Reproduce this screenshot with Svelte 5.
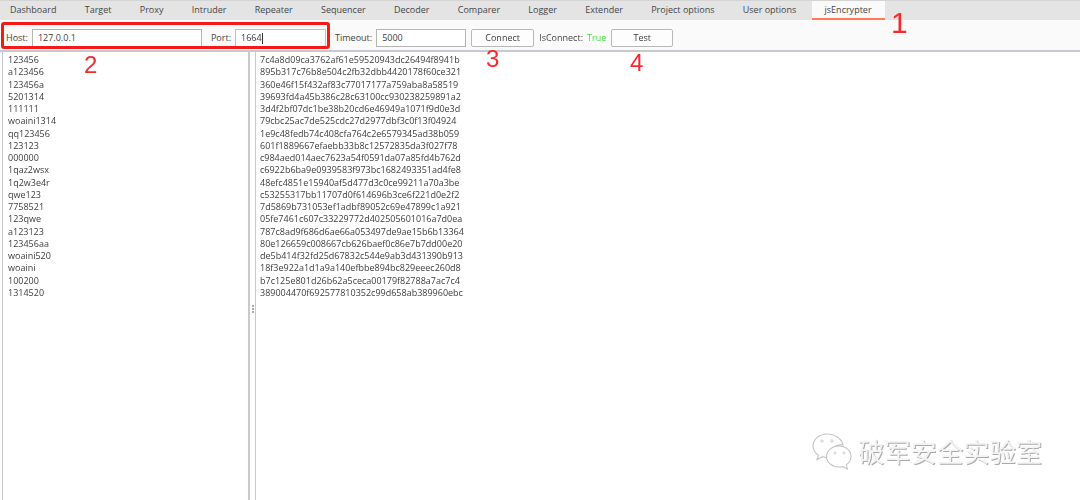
<script lang="ts">
  const tabs = ['Dashboard', 'Target', 'Proxy', 'Intruder', 'Repeater', 'Sequencer', 'Decoder', 'Comparer', 'Logger', 'Extender', 'Project options', 'User options', 'jsEncrypter'];
  const passwords = ['123456', 'a123456', '123456a', '5201314', '111111', 'woaini1314', 'qq123456', '123123', '000000', '1qaz2wsx', '1q2w3e4r', 'qwe123', '7758521', '123qwe', 'a123123', '123456aa', 'woaini520', 'woaini', '100200', '1314520'];
  const hashes = [
    '7c4a8d09ca3762af61e59520943dc26494f8941b',
    '895b317c76b8e504c2fb32dbb4420178f60ce321',
    '360e46f15f432af83c77017177a759aba8a58519',
    '39693fd4a45b386c28c63100cc930238259891a2',
    '3d4f2bf07dc1be38b20cd6e46949a1071f9d0e3d',
    '79cbc25ac7de525cdc27d2977dbf3c0f13f04924',
    '1e9c48fedb74c408cfa764c2e6579345ad38b059',
    '601f1889667efaebb33b8c12572835da3f027f78',
    'c984aed014aec7623a54f0591da07a85fd4b762d',
    'c6922b6ba9e0939583f973bc1682493351ad4fe8',
    '48efc4851e15940af5d477d3c0ce99211a70a3be',
    'c53255317bb11707d0f614696b3ce6f221d0e2f2',
    '7d5869b731053ef1adbf89052c69e47899c1a921',
    '05fe7461c607c33229772d402505601016a7d0ea',
    '787c8ad9f686d6ae66a053497de9ae15b6b13364',
    '80e126659c008667cb626baef0c86e7b7dd00e20',
    'de5b414f32fd25d67832c544e9ab3d431390b913',
    '18f3e922a1d1a9a140efbbe894bc829eeec260d8',
    'b7c125e801d26b62a5ceca00179f82788a7ac7c4',
    '389004470f692577810352c99d658ab389960ebc'
  ];
</script>

<div class="window">
  <nav class="tabs">
    {#each tabs as tab}
      <div class="tab" class:active={tab === 'jsEncrypter'}>{tab}</div>
    {/each}
  </nav>

  <div class="toolbar">
    <span class="label">Host:</span>
    <input class="host" value="127.0.0.1" />
    <span class="label port-label">Port:</span>
    <div class="port-wrap">
      <input class="port" value="1664" />
      <i class="caret"></i>
    </div>
    <span class="label timeout-label">Timeout:</span>
    <input class="timeout" value="5000" />
    <button class="connect">Connect</button>
    <span class="label">IsConnect:</span>
    <span class="status">True</span>
    <button class="test">Test</button>
  </div>

  <div class="panels">
    <div class="panel left">
      {#each passwords as line}
        <div class="line">{line}</div>
      {/each}
    </div>
    <div class="divider"><i></i><i></i><i></i></div>
    <div class="panel right">
      {#each hashes as line}
        <div class="line">{line}</div>
      {/each}
    </div>
  </div>

  <div class="redbox"></div>
  <span class="mark m1">1</span>
  <span class="mark m2">2</span>
  <span class="mark m3">3</span>
  <span class="mark m4">4</span>

  <div class="watermark">
    <svg width="42" height="38" viewBox="0 0 42 38" fill="#fff" stroke="#c4c4c4" stroke-width="1.1">
      <path d="M16 2C8 2 2 7.500 2 14c0 4 2.200 7 5.500 9.500L6 27.500l5.500-2.800c1.500.4 3 .7 4.500.7 1 0 2-.1 3-.3C18 18 24 12 32 13 31 7 24 2 16 2z" />
      <path d="M28 14c-7 0-12.500 4.700-12.500 10.500S21 35 28 35c1.300 0 2.600-.2 3.800-.6L36.500 37l-1.200-4.200c3-2 4.700-5 4.700-8.300C40 18.700 35 14 28 14z" />
      <circle cx="11" cy="9" r="1.200" stroke-width=".8" />
      <circle cx="21" cy="9" r="1.200" stroke-width=".8" />
      <circle cx="24" cy="21" r="1" stroke-width=".8" />
      <circle cx="33" cy="21" r="1" stroke-width=".8" />
    </svg>
    <span>破军安全实验室</span>
  </div>
</div>

<style>
  :global(body) {
    background: #fff;
  }

  .window {
    position: relative;
    width: 1080px;
    height: 500px;
    overflow: hidden;
    font-family: 'Open Sans', 'Liberation Sans', sans-serif;
    font-size: 9px;
    color: #3c3c3c;
    display: flex;
    flex-direction: column;
    filter: blur(0.35px);
  }

  .tabs {
    height: 20px;
    box-sizing: border-box;
    border-top: 1px solid #d4d4d4;
    background: #e4e4e4;
    display: flex;
    padding-left: 10px;
    flex: none;
  }

  .tab {
    margin-right: 28.25px;
    line-height: 18px;
    color: #444;
    white-space: nowrap;
  }

  .tab.active {
    margin-left: -13px;
    padding: 0 13px;
    margin-right: 0;
    background: #fafafa;
    border-bottom: 2px solid #ff7a59;
  }

  .toolbar {
    height: 32px;
    box-sizing: border-box;
    background: #fafafa;
    border-bottom: 2px solid #c8c8d0;
    display: flex;
    align-items: center;
    padding: 5px 0 0 6px;
    flex: none;
  }

  .label {
    color: #444;
    margin-right: 4px;
  }

  input {
    height: 18px;
    box-sizing: border-box;
    border: 1px solid #b4b4b4;
    background: #fff;
    padding: 0 5px;
    font: inherit;
    color: #3c3c3c;
    outline: none;
  }

  .host {
    width: 170px;
  }

  .port-label {
    margin-left: 9px;
  }

  .port-wrap {
    position: relative;
    display: flex;
  }

  .port {
    width: 91px;
    border-color: #a4c8e8;
  }

  .caret {
    position: absolute;
    left: 27px;
    top: 4px;
    width: 1px;
    height: 11px;
    background: #333;
  }

  .timeout-label {
    margin-left: 9px;
  }

  .timeout {
    width: 90px;
  }

  button {
    height: 18px;
    box-sizing: border-box;
    border: 1px solid #b8b8b8;
    border-radius: 2px;
    background: #fdfdfd;
    font: inherit;
    color: #3c3c3c;
    padding: 0;
  }

  .connect {
    width: 63px;
    margin: 0 5px;
  }

  .status {
    color: #3ee838;
    margin-right: 5px;
  }

  .test {
    width: 62px;
  }

  .panels {
    flex: 1;
    display: flex;
    padding-left: 2px;
  }

  .panel {
    box-sizing: border-box;
    padding: 2px 4px;
  }

  .line {
    height: 12.26px;
    line-height: 12.26px;
    white-space: nowrap;
  }

  .left {
    width: 248px;
    padding-left: 5px;
    border-left: 1px solid #c8c8d0;
    border-right: 2px solid #c8c8d0;
  }

  .right {
    flex: 1;
    border-left: 1px solid #c8c8d0;
  }

  .divider {
    width: 5px;
    display: flex;
    flex-direction: column;
    align-items: center;
    gap: 1px;
    padding-top: 253px;
  }

  .divider i {
    width: 2px;
    height: 2px;
    background: #aaa;
  }

  .redbox {
    position: absolute;
    left: 1px;
    top: 22px;
    width: 329px;
    height: 27px;
    box-sizing: border-box;
    border: 3px solid #f51a1a;
    border-radius: 3px;
  }

  .mark {
    position: absolute;
    color: #f52a2a;
    font-family: 'Liberation Sans', sans-serif;
    font-size: 24px;
    line-height: 28px;
  }

  .m1 { left: 891px; top: 8px; font-size: 30px; line-height: 30px; }
  .m2 { left: 84px; top: 51px; }
  .m3 { left: 486px; top: 45px; }
  .m4 { left: 630px; top: 49px; }

  .watermark {
    position: absolute;
    left: 811px;
    top: 431px;
    display: flex;
    align-items: center;
    gap: 5px;
  }

  .watermark span {
    font-family: 'Noto Sans CJK SC', sans-serif;
    font-size: 26.3px;
    line-height: 40px;
    color: #f4f4f4;
    text-shadow: 1px 1px 0 #aaa;
    white-space: nowrap;
  }
</style>
